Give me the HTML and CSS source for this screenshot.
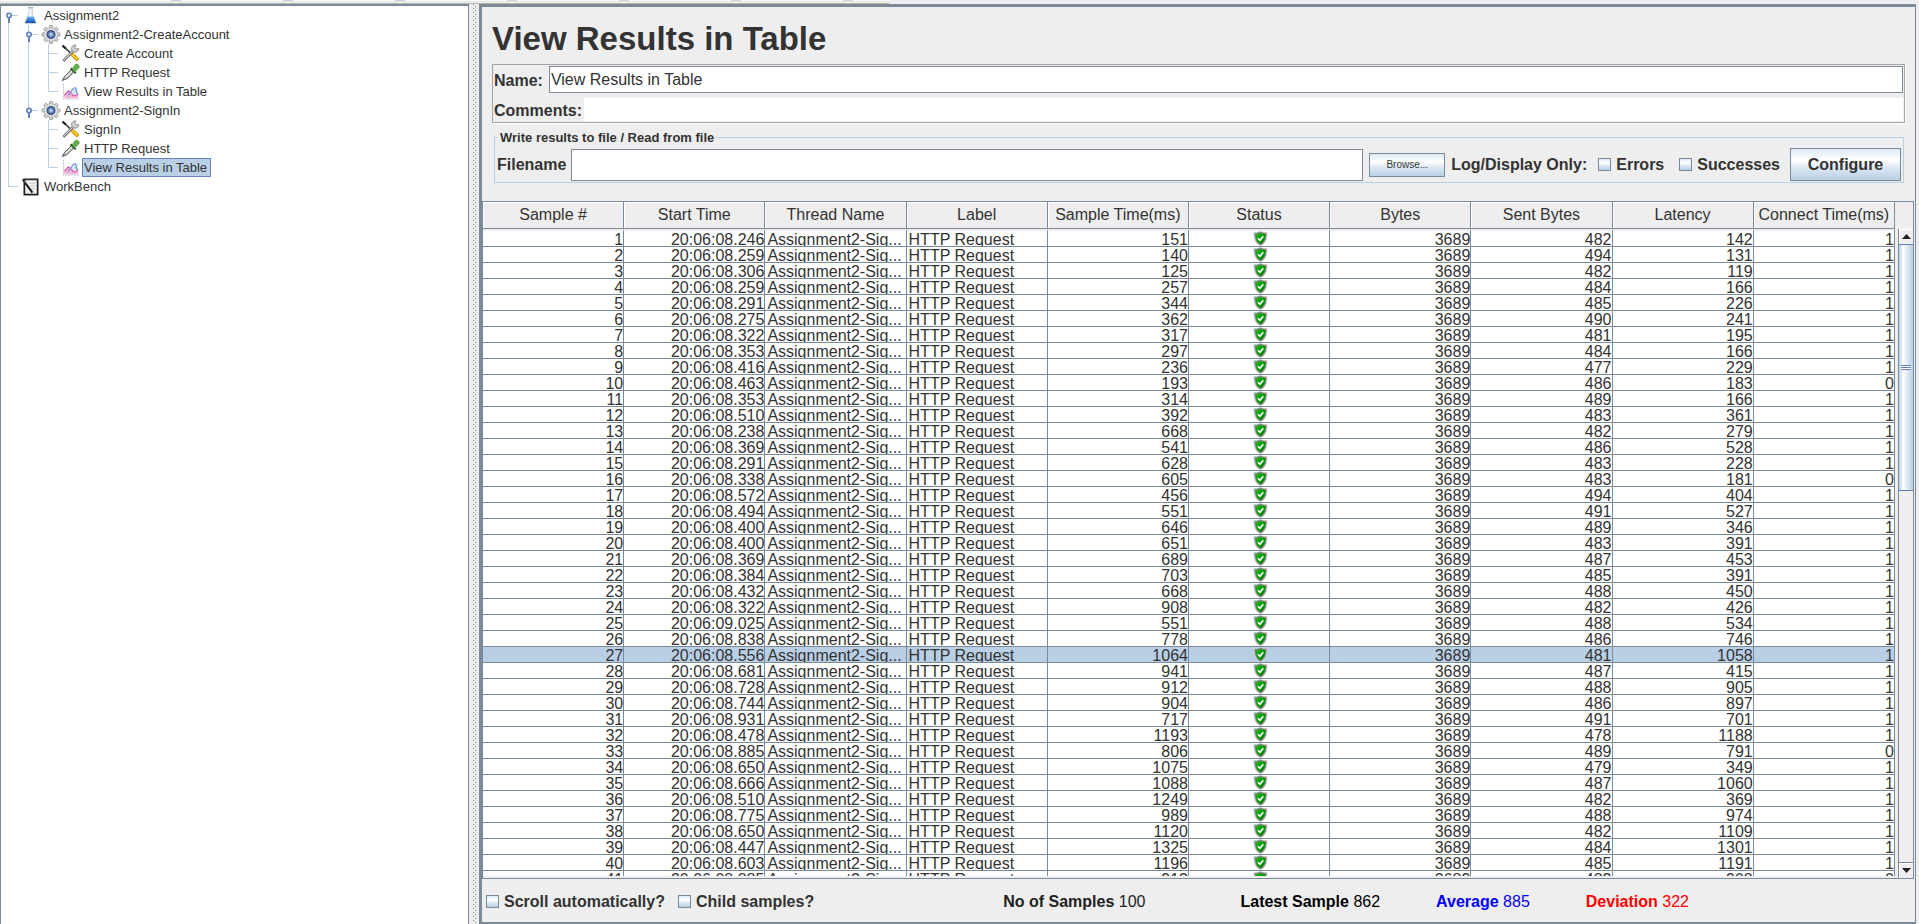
FILE: index.html
```html
<!DOCTYPE html>
<html lang="en">
<head>
<meta charset="utf-8">
<title>View Results in Table</title>
<link rel="stylesheet" href="styles.css">
</head>
<body>
<svg class="defs" aria-hidden="true">
  <defs>
    <linearGradient id="g-shield" x1="0" y1="0" x2="1" y2="1"><stop offset="0" stop-color="#2fb52c"/><stop offset=".5" stop-color="#06990a"/><stop offset="1" stop-color="#047c06"/></linearGradient>
    <linearGradient id="g-blue" x1="0" y1="0" x2="0" y2="1"><stop offset="0" stop-color="#6fb2f0"/><stop offset="1" stop-color="#0b56b8"/></linearGradient>
    <radialGradient id="g-hub"><stop offset="0" stop-color="#e8f0fb"/><stop offset=".45" stop-color="#7f9fd0"/><stop offset="1" stop-color="#34507f"/></radialGradient>
  </defs>
  <symbol id="shield" viewBox="0 0 15 15">
    <path d="M7.500 0 C5.700 1 3.600 1.300 .6 1.300 C.4 7.500 1.800 12.600 7.500 15 C13.200 12.600 14.600 7.500 14.400 1.300 C11.400 1.300 9.300 1 7.500 0Z" fill="#c4c4c4"/>
    <path d="M7.500 .8 C6 1.700 4.300 2 1.700 2.100 C1.600 7.500 2.900 11.900 7.500 14.200 C12.100 11.900 13.400 7.500 13.300 2.100 C10.700 2 9 1.700 7.500 .8Z" fill="#7d857d"/>
    <path d="M7.500 1.800 C6.200 2.600 4.700 3 2.600 3.100 C2.600 7.700 3.700 11.100 7.500 13.300 C11.300 11.100 12.400 7.700 12.400 3.100 C10.300 3 8.800 2.600 7.500 1.800Z" fill="url(#g-shield)"/>
    <path d="M5 7.200 L7 9.200 L10.300 5.300" fill="none" stroke="#fff" stroke-width="1.600"/>
  </symbol>
  <symbol id="flask" viewBox="0 0 20 20">
    <ellipse cx="9.500" cy="18" rx="7" ry="1.300" fill="#d5d5d5"/>
    <path d="M7.800 2 V8 L3.800 17.800 H15.200 L11.500 8 V2Z" fill="#e9eff6" stroke="#c0c6cf" stroke-width=".8"/>
    <path d="M6.300 11 L3.900 17.800 H15.100 L12.700 11Z" fill="url(#g-blue)"/>
    <path d="M7 1.700 H12.300" stroke="#aab0b8" stroke-width="1.300"/>
    <path d="M9 4 V11" stroke="#fff" stroke-width="1.200"/>
  </symbol>
  <symbol id="gear" viewBox="0 0 20 20">
    <g fill="#d9d9d9" stroke="#8e8e8e" stroke-width=".8">
      <path id="tooth" d="M8 4 L8.500 .6 H11.500 L12 4 Z"/>
      <use href="#tooth" transform="rotate(45 10 10)"/><use href="#tooth" transform="rotate(90 10 10)"/>
      <use href="#tooth" transform="rotate(135 10 10)"/><use href="#tooth" transform="rotate(180 10 10)"/>
      <use href="#tooth" transform="rotate(225 10 10)"/><use href="#tooth" transform="rotate(270 10 10)"/>
      <use href="#tooth" transform="rotate(315 10 10)"/>
    </g>
    <circle cx="10" cy="10" r="7.200" fill="#dedede" stroke="#a2a2a2" stroke-width=".6"/>
    <circle cx="10" cy="10" r="4.700" fill="#3b5488"/>
    <circle cx="10" cy="10" r="4" fill="url(#g-hub)"/>
  </symbol>
  <symbol id="tools" viewBox="0 0 20 20">
    <path d="M1.500 2 L10.500 10.500" stroke="#4a4a4a" stroke-width="1.800"/>
    <path d="M1 1.500 L4.500 4.800" stroke="#222" stroke-width="2.200"/>
    <path d="M10.500 10.500 L17.500 17" stroke="#c98d00" stroke-width="4"/>
    <path d="M10.500 10.500 L17 16.400" stroke="#f6cf2b" stroke-width="2.200"/>
    <path d="M2 17.800 L13 6.500" stroke="#555" stroke-width="2.800"/>
    <path d="M2.300 17.300 L13 6.300" stroke="#d4d4d4" stroke-width="1.200"/>
    <path d="M15 1 A3.800 3.800 0 1 0 18.200 4.800 L15.200 5.300 L14.200 3.800Z" fill="#d0d0d0" stroke="#777" stroke-width=".8"/>
  </symbol>
  <symbol id="dropper" viewBox="0 0 20 20">
    <path d="M.8 18.500 L3 14.500 L10.500 7 L13 9.500 L5.500 16.500Z" fill="#b9beb9" stroke="#4d524d" stroke-width="1"/>
    <path d="M4.500 15 L11 8.500" stroke="#f4f6f4" stroke-width="1.200"/>
    <path d="M9.500 5.500 L15 11" stroke="#2e5e2a" stroke-width="2"/>
    <path d="M11 6.500 L14.300 2 C16 .3 19.600 2.600 18.300 5 L14 9.200Z" fill="#63b34c" stroke="#3d7f31" stroke-width=".8"/>
  </symbol>
  <symbol id="chart" viewBox="0 0 20 20">
    <path d="M2 2 V18 H18" fill="none" stroke="#b8b8c4" stroke-width="1" stroke-dasharray="2 1"/>
    <path d="M3 17 V14 L7 9.500 L10 11 L12.500 14.500 L17.500 13 V17Z" fill="#f4b3dc"/>
    <path d="M3 14 L7 9.500 L10 11 L12.500 14.500 L17.500 13" fill="none" stroke="#d9509f" stroke-width="1.200"/>
    <path d="M9.500 11.500 C11 7 12.500 5.500 17 5.500 V12 C15 14 13 14 11.500 11Z" fill="#d4e6fa"/>
    <path d="M7 14 C10.500 12 10.500 6 14 6 C16.500 6 14.500 12.500 17.500 12.500" fill="none" stroke="#6f92cc" stroke-width="1.200"/>
  </symbol>
  <symbol id="pad" viewBox="0 0 20 20">
    <rect x="3" y="2.500" width="14" height="16" fill="#f3f3f3" stroke="#1e1e1e" stroke-width="1.800"/>
    <path d="M2.500 1.900 H17.500" stroke="#777" stroke-width="1.300" stroke-dasharray="1 1"/>
    <path d="M7.500 6.500 H14.500 M8.500 9.500 H14.500 M10.500 12.500 H14.500" stroke="#c5c5c5" stroke-width="1"/>
    <path d="M1.200 2.500 L11.500 16.500" stroke="#111" stroke-width="2"/>
    <path d="M2 3.500 L4.500 6.700" stroke="#999" stroke-width=".8"/>
  </symbol>
  <symbol id="handle" viewBox="0 0 8 12">
    <path d="M4 5 V11" stroke="#6382bf" stroke-width="2"/>
    <circle cx="4" cy="3.500" r="2.200" fill="#fff" stroke="#6382bf" stroke-width="1.700"/>
  </symbol>
</svg>

<div class="app">
  <div class="toolbar-edge"><i></i><i></i><i></i><i></i><i></i><i></i><i></i></div>
  <div class="split">
    <nav class="tree-pane" aria-label="Test plan">
      <ul class="tree">
        <li>
          <svg class="knob"><use href="#handle"/></svg>
          <div class="node"><svg><use href="#flask"/></svg><span>Assignment2</span></div>
          <ul>
            <li>
              <svg class="knob"><use href="#handle"/></svg>
              <div class="node"><svg><use href="#gear"/></svg><span>Assignment2-CreateAccount</span></div>
              <ul>
                <li><div class="node"><svg><use href="#tools"/></svg><span>Create Account</span></div></li>
                <li><div class="node"><svg><use href="#dropper"/></svg><span>HTTP Request</span></div></li>
                <li><div class="node"><svg><use href="#chart"/></svg><span>View Results in Table</span></div></li>
              </ul>
            </li>
            <li>
              <svg class="knob"><use href="#handle"/></svg>
              <div class="node"><svg><use href="#gear"/></svg><span>Assignment2-SignIn</span></div>
              <ul>
                <li><div class="node"><svg><use href="#tools"/></svg><span>SignIn</span></div></li>
                <li><div class="node"><svg><use href="#dropper"/></svg><span>HTTP Request</span></div></li>
                <li><div class="node selected"><svg><use href="#chart"/></svg><span>View Results in Table</span></div></li>
              </ul>
            </li>
          </ul>
        </li>
        <li><div class="node"><svg><use href="#pad"/></svg><span>WorkBench</span></div></li>
      </ul>
    </nav>
    <div class="divider"></div>
    <main class="panel">
      <h1>View Results in Table</h1>
      <div class="naming">
        <div class="name-row"><label for="name">Name:</label><input id="name" type="text" value="View Results in Table"></div>
        <div class="comment-row"><label for="comments">Comments:</label><input id="comments" type="text"></div>
      </div>
      <fieldset class="file-box">
        <legend>Write results to file / Read from file</legend>
        <div class="file-row">
          <label for="filename">Filename</label>
          <input id="filename" type="text">
          <button class="browse" type="button">Browse...</button>
          <span class="only">Log/Display Only:</span>
          <label class="check errors"><input type="checkbox">Errors</label>
          <label class="check successes"><input type="checkbox">Successes</label>
          <button class="configure" type="button">Configure</button>
        </div>
      </fieldset>
      <div class="results">
        <div class="viewport">
          <table>
            <thead><tr><th>Sample #</th><th>Start Time</th><th>Thread Name</th><th>Label</th><th>Sample Time(ms)</th><th>Status</th><th>Bytes</th><th>Sent Bytes</th><th>Latency</th><th>Connect Time(ms)</th></tr></thead>
            <tbody id="rows"></tbody>
          </table>
        </div>
        <div class="scrollbar">
          <button type="button" aria-label="Scroll up"><svg viewBox="0 0 9 5"><path d="M0 5 L4.500 0 L9 5Z"/></svg></button>
          <div class="track"><div class="thumb"><i></i></div></div>
          <button type="button" aria-label="Scroll down"><svg viewBox="0 0 9 5"><path d="M0 0 L4.500 5 L9 0Z"/></svg></button>
        </div>
      </div>
      <footer class="summary">
        <label class="check"><input type="checkbox">Scroll automatically?</label>
        <label class="check"><input type="checkbox">Child samples?</label>
        <div class="stats">
          <span class="count"><b>No of Samples</b> 100</span>
          <span class="latest"><b>Latest Sample</b> 862</span>
          <span class="average"><b>Average</b> 885</span>
          <span class="deviation"><b>Deviation</b> 322</span>
        </div>
      </footer>
    </main>
  </div>
</div>
<script src="app.js"></script>
</body>
</html>
```

FILE: styles.css
```css
* { box-sizing: border-box; }
body {
  margin: 0;
  background: #eee;
  color: #333;
  font: 16px/18px "Liberation Sans", Arial, sans-serif;
}
.defs { position: absolute; width: 0; height: 0; }
input, button { font: inherit; color: inherit; }

.app { display: flex; flex-direction: column; height: 100vh; overflow: hidden; }
.toolbar-edge {
  display: flex;
  flex: none;
  gap: 102px;
  width: 889px;
  height: 4px;
  padding-left: 171px;
  background: linear-gradient(#fbfbfb 1px, #dcdcdc 1px, #f0f0ee 2px, #f0f0ee 3px, #b4b4ae 3px);
}
.toolbar-edge i { width: 10px; height: 1px; background: #d4d4d8; }
.split { display: flex; flex: 1; min-height: 0; }

/* test plan tree */
.tree-pane {
  flex: none;
  width: 469px;
  background: #fff;
  border: solid #7a8a99;
  border-width: 2px 1px 0;
}
.tree, .tree ul { list-style: none; margin: 0; padding: 0; }
.tree { font-size: 13px; line-height: 17px; }
.tree ul { margin-left: 20px; }
.tree li { position: relative; }
.tree li::before {
  content: "";
  position: absolute;
  left: 7px;
  top: 0;
  bottom: 0;
  width: 1px;
  background: #b8cfe5;
}
.tree > li:first-child::before { top: 10px; }
.tree li:last-child::before { bottom: auto; height: 10px; }
.tree li::after {
  content: "";
  position: absolute;
  left: 8px;
  top: 9px;
  width: 9px;
  height: 1px;
  background: #b8cfe5;
}
.knob { position: absolute; z-index: 1; left: 4px; top: 6px; width: 8px; height: 12px; }
.node { display: flex; align-items: center; gap: 2px; height: 19px; padding-left: 20px; }
.node svg { flex: none; width: 20px; height: 19px; }
.node span { padding: 0 1px; border: 1px solid transparent; margin-left: -1px; }
.node.selected span { background: #b8cfe5; border-color: #6382bf; padding-right: 3px; }

.divider {
  flex: none;
  width: 10px;
  border: solid #eee;
  border-width: 0 2px 0 4px;
  background:
    conic-gradient(at 1px 1px, transparent 75%, #7a8a99 0) 0 0 / 4px 4px,
    conic-gradient(at 1px 1px, transparent 75%, #7a8a99 0) 2px 2px / 4px 4px,
    #eee;
}

/* listener panel */
.panel {
  display: flex;
  flex: 1;
  flex-direction: column;
  min-width: 0;
  margin-right: 3px;
  border: 1px solid #7a8a99;
  border-width: 3px 1px 2px 3px;
}
h1 { margin: 17px 10px 10px; font-size: 33px; line-height: 30px; }
.naming { margin: 0 10px; border: 1px solid #a3a3a3; padding: 1px; box-shadow: 1px 1px #fff; }
.naming label, .file-row { font-weight: bold; }
.naming label { padding-top: 2px; }
input[type="text"] { flex: 1; min-width: 0; margin: 0; padding: 1px 1px 0; background: #fff; border: 1px solid #7a8a99; border-radius: 0; font-weight: normal; }
.name-row { display: flex; align-items: center; gap: 6px; }
.name-row input { height: 27px; }
.comment-row { display: flex; align-items: center; margin-top: 5px; }
.comment-row input { height: 23px; margin-left: 2px; border: 0; }
.file-box { min-width: 0; margin: 6px 11px 18px 12px; padding: 2px 2px 1px 2px; border: 1px solid #b8cfe5; }
legend { margin-left: 1px; padding: 0 2px; font-size: 13px; line-height: 17px; font-weight: bold; }
.file-row { display: flex; align-items: center; }
.file-row > input { height: 32px; margin: 0 6px 0 5px; }
button { padding: 0; border: 1px solid #7a8a99; border-radius: 0; background: linear-gradient(#dde8f3, #fff 35%, #dde8f3 60%, #b8cfe5); }
.browse { width: 76px; height: 24px; font-size: 10px; font-weight: normal; }
.configure { width: 111px; height: 33px; margin-left: 10px; font-weight: bold; }
.only { margin: 0 11px 0 6px; }
.check { display: flex; align-items: center; gap: 5px; font-weight: bold; }
.check input {
  appearance: none;
  width: 13px;
  height: 13px;
  margin: 0;
  border: 1px solid #7a8a99;
  background: linear-gradient(#dde8f3, #fff 35%, #dde8f3 60%, #b8cfe5);
}
.successes { margin-left: 15px; }

/* sample table */
.results {
  display: flex;
  flex: 1;
  min-height: 0;
  margin-right: 1px;
  padding-bottom: 2px;
  border: solid #7a8a99;
  border-width: 1px 1px 1px;
}
.viewport { flex: 1; min-width: 0; overflow: hidden; }
table { width: 100%; table-layout: fixed; border-collapse: separate; border-spacing: 0; }
th {
  height: 27px;
  padding: 0;
  background: #eee;
  border: solid #7a8a99;
  border-width: 0 1px 1px 0;
  box-shadow: inset 1px 1px #fff;
  font-weight: normal;
  white-space: nowrap;
}
td { height: 16px; padding: 0; background: #fff; border: solid #7a8a99; border-width: 0 1px 1px 0; text-align: right; }
td div { height: 15px; padding-left: 2px; line-height: 17px; white-space: nowrap; }
tr:first-child td { border-top: 2px solid #eee; }
td.text { text-align: left; }
td.text div { overflow: hidden; }
td.status div { display: flex; justify-content: center; }
td svg { width: 15px; height: 15px; }
tr.selected td { background: #b8cfe5; }

.scrollbar { display: flex; flex: none; flex-direction: column; width: 15px; margin: 27px 0 -2px 3px; border-left: 1px solid #7a8a99; }
.scrollbar button { display: flex; flex: none; align-items: center; justify-content: center; height: 15px; border: 0; background: #eee; box-shadow: inset 1px 1px #fff; }
.scrollbar svg { width: 9px; height: 5px; fill: #222; }
.track { flex: 1; border-bottom: 1px solid #7a8a99; }
.thumb { display: grid; place-items: center; height: 40%; border: solid #6382bf; border-width: 1px 0; background: linear-gradient(90deg, #b8cfe5, #fff 30%, #dde8f3 60%, #b8cfe5); }
.thumb i { width: 10px; height: 5px; background: repeating-linear-gradient(#6382bf 0 1px, #fff 1px 2px); }

.summary { display: flex; flex: none; align-items: center; gap: 13px; height: 43px; padding: 2px 4px 0; }
.stats { display: flex; flex: 1; margin-left: 176px; color: #000; }
.count { color: #222; margin-right: 95px; }
.latest, .average { margin-right: 56px; }
.average { color: #00f; }
.deviation { color: #f00; }
```

FILE: app.js
```javascript
// [start time, sample time, sent bytes, latency, connect time]
const samples = [
  ["08.246", 151, 482, 142, 1], ["08.259", 140, 494, 131, 1], ["08.306", 125, 482, 119, 1],
  ["08.259", 257, 484, 166, 1], ["08.291", 344, 485, 226, 1], ["08.275", 362, 490, 241, 1],
  ["08.322", 317, 481, 195, 1], ["08.353", 297, 484, 166, 1], ["08.416", 236, 477, 229, 1],
  ["08.463", 193, 486, 183, 0], ["08.353", 314, 489, 166, 1], ["08.510", 392, 483, 361, 1],
  ["08.238", 668, 482, 279, 1], ["08.369", 541, 486, 528, 1], ["08.291", 628, 483, 228, 1],
  ["08.338", 605, 483, 181, 0], ["08.572", 456, 494, 404, 1], ["08.494", 551, 491, 527, 1],
  ["08.400", 646, 489, 346, 1], ["08.400", 651, 483, 391, 1], ["08.369", 689, 487, 453, 1],
  ["08.384", 703, 485, 391, 1], ["08.432", 668, 488, 450, 1], ["08.322", 908, 482, 426, 1],
  ["09.025", 551, 488, 534, 1], ["08.838", 778, 486, 746, 1], ["08.556", 1064, 481, 1058, 1],
  ["08.681", 941, 487, 415, 1], ["08.728", 912, 488, 905, 1], ["08.744", 904, 486, 897, 1],
  ["08.931", 717, 491, 701, 1], ["08.478", 1193, 478, 1188, 1], ["08.885", 806, 489, 791, 0],
  ["08.650", 1075, 479, 349, 1], ["08.666", 1088, 487, 1060, 1], ["08.510", 1249, 482, 369, 1],
  ["08.775", 989, 488, 974, 1], ["08.650", 1120, 482, 1109, 1], ["08.447", 1325, 484, 1301, 1],
  ["08.603", 1196, 485, 1191, 1], ["08.885", 913, 482, 908, 0]
];
const selectedSample = 27;
const cell = (value, kind = "") => `<td class="${kind}"><div>${value}</div></td>`;

document.getElementById("rows").innerHTML = samples.map(([time, elapsed, sent, latency, connect], i) =>
  `<tr class="${i + 1 === selectedSample ? "selected" : ""}">` +
  cell(i + 1) + cell("20:06:" + time) + cell("Assignment2-Sig...", "text") + cell("HTTP Request", "text") +
  cell(elapsed) + cell('<svg role="img" aria-label="Success"><use href="#shield"/></svg>', "status") +
  cell(3689) + cell(sent) + cell(latency) + cell(connect) + "</tr>"
).join("");
```
